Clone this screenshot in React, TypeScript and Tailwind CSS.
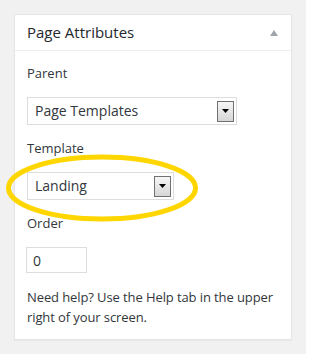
export default function App() {
  const font = { fontFamily: '"Open Sans", "Noto Sans", sans-serif' };
  return (
    <div
      className="min-h-[354px] w-[306px] bg-[#f1f1f1] px-[14px] pt-[14px] text-[#32373c]"
      style={font}
    >
      <div className="relative border border-[#e5e5e5] bg-white shadow-[0_1px_1px_rgba(0,0,0,0.04)]">
        {/* Header */}
        <div className="flex h-[36px] items-center justify-between border-b border-[#eeeeee] pl-[12px] pr-[13px]">
          <h2 className="text-[15px] leading-none text-[#23282d]">Page Attributes</h2>
          <svg width="8" height="6" viewBox="0 0 8 6">
            <path d="M4 0 L8 6 L0 6 Z" fill="#a0a5aa" />
          </svg>
        </div>

        {/* Body */}
        <div className="flex flex-col px-[12px] pb-[12px] pt-[13px] text-[13px]">
          <p className="leading-[18px]">Parent</p>
          <Select value="Page Templates" width="w-[210px]" className="mt-[15px]" />
          <p className="mt-[14px] leading-[18px]">Template</p>
          <Select value="Landing" width="w-[147px]" className="mt-[15px]" />
          <p className="mt-[14px] leading-[18px]">Order</p>
          <div className="mt-[15px] flex h-[26px] w-[61px] items-center border border-[#dddddd] pl-[6px] text-[14px] -ml-px">
            0
          </div>
          <p className="mt-[14px] leading-[20px] tracking-[-0.1px]">
            Need help? Use the Help tab in the upper right of your screen.
          </p>
        </div>

        {/* highlight ring */}
        <svg
          className="pointer-events-none absolute left-[-10px] top-[139px]"
          width="194"
          height="68"
          viewBox="0 0 194 68"
        >
          <ellipse cx="97" cy="34" rx="93.5" ry="31" fill="none" stroke="#ffd600" strokeWidth="5" />
        </svg>
      </div>
    </div>
  );
}

function Select({ value, width, className }: { value: string; width: string; className: string }) {
  return (
    <div
      className={`${width} ${className} flex h-[28px] items-center justify-between border border-[#dddddd] bg-white pl-[7px] pr-[2px] text-[14px] text-[#32373c]`}
    >
      <span className="leading-none">{value}</span>
      <span className="flex h-[21px] w-[17px] items-center justify-center border border-[#707070] bg-gradient-to-b from-[#f6f6f6] to-[#d6d6d6]">
        <svg width="7" height="4" viewBox="0 0 7 4">
          <path d="M0 0 L7 0 L3.5 4 Z" fill="#000" />
        </svg>
      </span>
    </div>
  );
}
